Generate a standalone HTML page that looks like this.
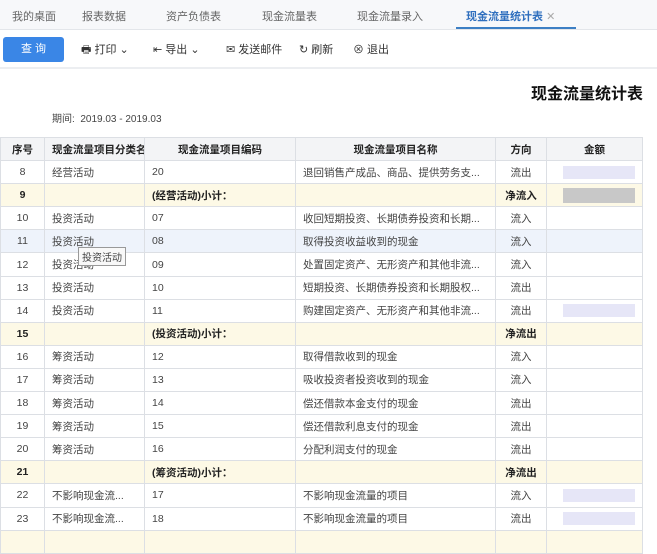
<!DOCTYPE html><html><head><meta charset="utf-8"><style>
*{margin:0;padding:0;box-sizing:border-box}
body{width:657px;height:537px;overflow:hidden;background:#fff;font-family:"Liberation Sans","Noto Sans CJK SC",sans-serif;font-size:11px;color:#333;position:relative}
.tabs{position:absolute;left:0;top:0;width:657px;height:30px;background:#f7f8fa;border-bottom:1px solid #e3e6ea}
.tab{position:absolute;top:8px;font-size:11px;color:#666}
.act{color:#2f6fbe;font-weight:bold}
.ul{position:absolute;left:456px;top:27px;width:120px;height:2px;background:#3c7fc4}
.tb{position:absolute;left:0;top:31px;width:657px;height:38px;background:#fff;border-bottom:2px solid #eceef1}
.btn{position:absolute;left:3px;top:6px;width:61px;height:25px;background:#3a86e6;border-radius:3px;color:#fff;text-align:center;line-height:25px;font-size:11px}
.ti{position:absolute;top:10px;font-size:11px;color:#333}
h1{position:absolute;right:14px;top:80px;font-size:16px;font-weight:bold;color:#111}
.per{position:absolute;left:52px;top:110px;font-size:10px;color:#444}
table{position:absolute;left:0;top:137px;border-collapse:collapse;table-layout:fixed;width:642px}
td,th{border:1px solid #dcdfe4;height:23.1px;padding:0 7px;white-space:nowrap;overflow:hidden;font-size:10.5px;color:#444}
th{background:#f3f4f6;font-weight:bold;color:#222;text-align:center}
td.c{text-align:center}
tr.s td{background:#fdf9e6;font-weight:bold;color:#222}
tr.h td{background:#eef3fb}
.blur{display:inline-block;width:72px;height:15px;background:#c8c8c8;vertical-align:middle}
.bl2{display:inline-block;width:72px;height:13px;background:#e6e6f7;vertical-align:middle}
.tip{position:absolute;left:78px;top:247px;border:1px solid #999;background:#f8f8f8;font-size:10px;padding:1px 3px;color:#444}
</style></head><body>
<div class="tabs">
<span class="tab" style="left:12px">我的桌面</span>
<span class="tab" style="left:82px">报表数据</span>
<span class="tab" style="left:166px">资产负债表</span>
<span class="tab" style="left:262px">现金流量表</span>
<span class="tab" style="left:357px">现金流量录入</span>
<span class="tab act" style="left:466px">现金流量统计表 <span style="color:#aaa;font-weight:normal">✕</span></span>
<div class="ul"></div>
</div>
<div class="tb">
<div class="btn">查 询</div>
<span class="ti" style="left:81px">🖶 打印 ⌄</span>
<span class="ti" style="left:153px">⇤ 导出 ⌄</span>
<span class="ti" style="left:226px">✉ 发送邮件</span>
<span class="ti" style="left:299px">↻ 刷新</span>
<span class="ti" style="left:353px">⊗ 退出</span>
</div>
<h1>现金流量统计表</h1>
<div class="per">期间:&nbsp; 2019.03 - 2019.03</div>
<table>
<colgroup><col style="width:44px"><col style="width:100px"><col style="width:151px"><col style="width:200px"><col style="width:51px"><col style="width:96px"></colgroup>
<tr><th>序号</th><th style="text-align:left">现金流量项目分类名</th><th>现金流量项目编码</th><th>现金流量项目名称</th><th>方向</th><th>金额</th></tr>
<tr><td class="c">8</td><td>经营活动</td><td>20</td><td>退回销售产成品、商品、提供劳务支...</td><td class="c">流出</td><td style="text-align:right"><span class="bl2"></span></td></tr>
<tr class="s"><td class="c">9</td><td></td><td>(经营活动)小计：</td><td></td><td class="c">净流入</td><td style="text-align:right"><span class="blur"></span></td></tr>
<tr><td class="c">10</td><td>投资活动</td><td>07</td><td>收回短期投资、长期债券投资和长期...</td><td class="c">流入</td><td></td></tr>
<tr class="h"><td class="c">11</td><td>投资活动</td><td>08</td><td>取得投资收益收到的现金</td><td class="c">流入</td><td></td></tr>
<tr><td class="c">12</td><td>投资活动</td><td>09</td><td>处置固定资产、无形资产和其他非流...</td><td class="c">流入</td><td></td></tr>
<tr><td class="c">13</td><td>投资活动</td><td>10</td><td>短期投资、长期债券投资和长期股权...</td><td class="c">流出</td><td></td></tr>
<tr><td class="c">14</td><td>投资活动</td><td>11</td><td>购建固定资产、无形资产和其他非流...</td><td class="c">流出</td><td style="text-align:right"><span class="bl2"></span></td></tr>
<tr class="s"><td class="c">15</td><td></td><td>(投资活动)小计：</td><td></td><td class="c">净流出</td><td></td></tr>
<tr><td class="c">16</td><td>筹资活动</td><td>12</td><td>取得借款收到的现金</td><td class="c">流入</td><td></td></tr>
<tr><td class="c">17</td><td>筹资活动</td><td>13</td><td>吸收投资者投资收到的现金</td><td class="c">流入</td><td></td></tr>
<tr><td class="c">18</td><td>筹资活动</td><td>14</td><td>偿还借款本金支付的现金</td><td class="c">流出</td><td></td></tr>
<tr><td class="c">19</td><td>筹资活动</td><td>15</td><td>偿还借款利息支付的现金</td><td class="c">流出</td><td></td></tr>
<tr><td class="c">20</td><td>筹资活动</td><td>16</td><td>分配利润支付的现金</td><td class="c">流出</td><td></td></tr>
<tr class="s"><td class="c">21</td><td></td><td>(筹资活动)小计：</td><td></td><td class="c">净流出</td><td></td></tr>
<tr><td class="c">22</td><td>不影响现金流...</td><td>17</td><td>不影响现金流量的项目</td><td class="c">流入</td><td style="text-align:right"><span class="bl2"></span></td></tr>
<tr><td class="c">23</td><td>不影响现金流...</td><td>18</td><td>不影响现金流量的项目</td><td class="c">流出</td><td style="text-align:right"><span class="bl2"></span></td></tr>
<tr class="s"><td class="c"></td><td></td><td></td><td></td><td></td><td></td></tr>
</table>
<div class="tip">投资活动</div>
</body></html>
